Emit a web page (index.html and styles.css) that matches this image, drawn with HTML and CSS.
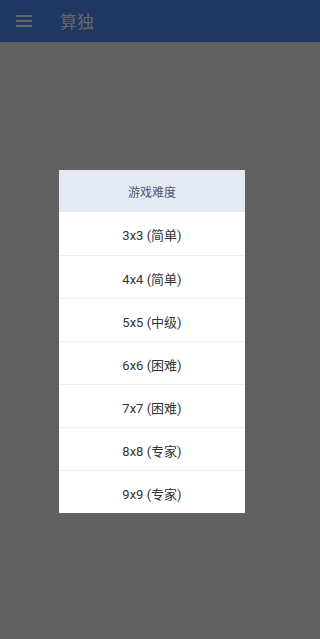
FILE: index.html
```html
<!DOCTYPE html>
<html lang="zh">
<head>
<meta charset="utf-8">
<title>算独</title>
<link rel="stylesheet" href="styles.css">
</head>
<body>
<header class="appbar">
  <svg class="menu" width="16" height="12" viewBox="0 0 16 12"><rect x="0" y="0" width="16" height="2" fill="#fff"/><rect x="0" y="5" width="16" height="2" fill="#fff"/><rect x="0" y="10" width="16" height="2" fill="#fff"/></svg>
  <span class="title">算独</span>
</header>
<main class="page"></main>
<div class="mask"></div>
<div class="dialog">
  <div class="dialog-head">游戏难度</div>
  <div class="item">3x3 (简单)</div>
  <div class="item">4x4 (简单)</div>
  <div class="item">5x5 (中级)</div>
  <div class="item">6x6 (困难)</div>
  <div class="item">7x7 (困难)</div>
  <div class="item">8x8 (专家)</div>
  <div class="item">9x9 (专家)</div>
</div>
</body>
</html>
```
FILE: styles.css
```css
html, body {
  margin: 0;
  padding: 0;
  height: 100%;
}
body {
  background: #f0f0f2;
  font-family: Roboto, "Noto Sans CJK SC", sans-serif;
  overflow: hidden;
}
.appbar {
  height: 42px;
  background: #4f8cf7;
  display: flex;
  align-items: center;
  padding-left: 16px;
  box-sizing: border-box;
}
.menu {
  display: block;
  margin-top: -1px;
}
.title {
  margin-left: 28px;
  color: #fff;
  font-family: "Noto Sans CJK SC", sans-serif;
  font-size: 17px;
  margin-top: -1px;
}
.mask {
  position: fixed;
  inset: 0;
  background: rgba(0, 0, 0, 0.6);
}
.dialog {
  position: absolute;
  top: 170px;
  left: 59px;
  width: 186px;
  background: #fff;
}
.dialog-head {
  height: 42px;
  background: #e4e9f2;
  color: #4b5874;
  font-size: 12px;
  font-family: "Noto Sans CJK SC", sans-serif;
  display: flex;
  align-items: center;
  justify-content: center;
}
.item {
  height: 40px;
  padding-top: 2px;
  border-top: 1px solid #eef0f3;
  color: #333;
  font-size: 13px;
  display: flex;
  align-items: center;
  justify-content: center;
}
.dialog-head + .item {
  border-top: none;
  height: 41px;
}
```
